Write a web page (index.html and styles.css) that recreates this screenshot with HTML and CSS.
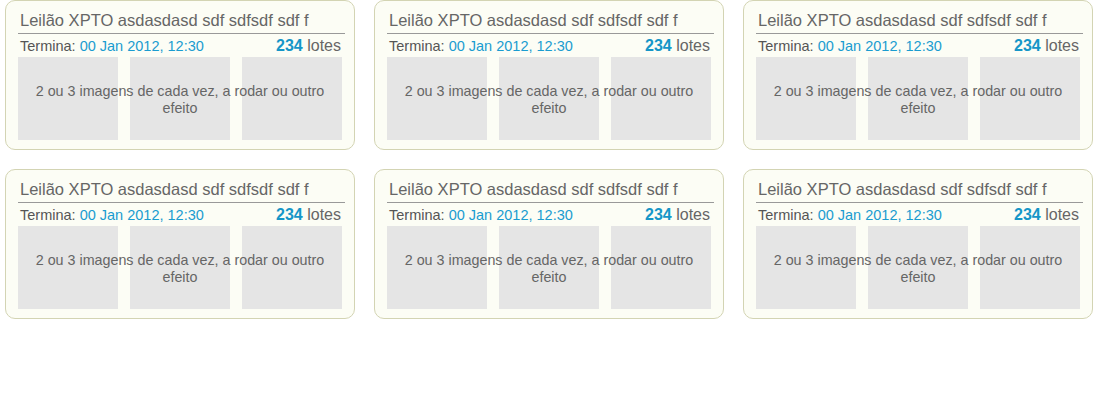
FILE: index.html
```html
<!DOCTYPE html>
<html lang="pt">
<head>
    <meta charset="UTF-8">
    <title>Leilões</title>
    <link rel="stylesheet" href="styles.css">
</head>
<body>

<div class="auctions">
    <div class="auction">
        <h3 class="auction-title">Leilão XPTO asdasdasd sdf sdfsdf sdf f</h3>
        <div class="auction-meta">
            <span class="ends">Termina: <span class="date">00 Jan 2012, 12:30</span></span>
            <span class="lots"><b>234</b> lotes</span>
        </div>
        <div class="gallery">
            <div class="thumbs"><div class="thumb"></div><div class="thumb"></div><div class="thumb"></div></div>
            <p class="caption">2 ou 3 imagens de cada vez, a rodar ou outro efeito</p>
        </div>
    </div>
    <div class="auction">
        <h3 class="auction-title">Leilão XPTO asdasdasd sdf sdfsdf sdf f</h3>
        <div class="auction-meta">
            <span class="ends">Termina: <span class="date">00 Jan 2012, 12:30</span></span>
            <span class="lots"><b>234</b> lotes</span>
        </div>
        <div class="gallery">
            <div class="thumbs"><div class="thumb"></div><div class="thumb"></div><div class="thumb"></div></div>
            <p class="caption">2 ou 3 imagens de cada vez, a rodar ou outro efeito</p>
        </div>
    </div>
    <div class="auction">
        <h3 class="auction-title">Leilão XPTO asdasdasd sdf sdfsdf sdf f</h3>
        <div class="auction-meta">
            <span class="ends">Termina: <span class="date">00 Jan 2012, 12:30</span></span>
            <span class="lots"><b>234</b> lotes</span>
        </div>
        <div class="gallery">
            <div class="thumbs"><div class="thumb"></div><div class="thumb"></div><div class="thumb"></div></div>
            <p class="caption">2 ou 3 imagens de cada vez, a rodar ou outro efeito</p>
        </div>
    </div>
    <div class="auction">
        <h3 class="auction-title">Leilão XPTO asdasdasd sdf sdfsdf sdf f</h3>
        <div class="auction-meta">
            <span class="ends">Termina: <span class="date">00 Jan 2012, 12:30</span></span>
            <span class="lots"><b>234</b> lotes</span>
        </div>
        <div class="gallery">
            <div class="thumbs"><div class="thumb"></div><div class="thumb"></div><div class="thumb"></div></div>
            <p class="caption">2 ou 3 imagens de cada vez, a rodar ou outro efeito</p>
        </div>
    </div>
    <div class="auction">
        <h3 class="auction-title">Leilão XPTO asdasdasd sdf sdfsdf sdf f</h3>
        <div class="auction-meta">
            <span class="ends">Termina: <span class="date">00 Jan 2012, 12:30</span></span>
            <span class="lots"><b>234</b> lotes</span>
        </div>
        <div class="gallery">
            <div class="thumbs"><div class="thumb"></div><div class="thumb"></div><div class="thumb"></div></div>
            <p class="caption">2 ou 3 imagens de cada vez, a rodar ou outro efeito</p>
        </div>
    </div>
    <div class="auction">
        <h3 class="auction-title">Leilão XPTO asdasdasd sdf sdfsdf sdf f</h3>
        <div class="auction-meta">
            <span class="ends">Termina: <span class="date">00 Jan 2012, 12:30</span></span>
            <span class="lots"><b>234</b> lotes</span>
        </div>
        <div class="gallery">
            <div class="thumbs"><div class="thumb"></div><div class="thumb"></div><div class="thumb"></div></div>
            <p class="caption">2 ou 3 imagens de cada vez, a rodar ou outro efeito</p>
        </div>
    </div>
</div>

</body>
</html>
```

FILE: styles.css
```css
body {
    font-family: 'Liberation Sans', Arial, sans-serif;
    background-color: #fff;
    margin: 0;
}

.auctions {
    display: grid;
    grid-template-columns: repeat(3, 350px);
    column-gap: 19px;
    row-gap: 19px;
    padding-left: 5px;
}

.auction {
    box-sizing: border-box;
    height: 150px;
    background-color: #fcfdf5;
    border: 1px solid #d3d4b3;
    border-radius: 10px;
    padding: 0 9px 0 12px;
}

.auction-title {
    margin: 0;
    padding: 10px 0 4px 2px;
    font-size: 16.5px;
    font-weight: normal;
    line-height: 18px;
    color: #666;
    border-bottom: 1px solid #999;
}

.auction-meta {
    display: flex;
    justify-content: space-between;
    align-items: baseline;
    padding: 3px 4px 0 2px;
    height: 20px;
    color: #555;
}

.ends {
    font-size: 14.5px;
}

.date {
    color: #1a9cd0;
}

.lots {
    font-size: 16px;
    color: #666;
}

.lots b {
    color: #1596c8;
}

.gallery {
    display: grid;
    margin-right: 3px;
}

.thumbs,
.caption {
    grid-area: 1 / 1;
}

.thumbs {
    display: flex;
    justify-content: space-between;
}

.thumb {
    width: 100px;
    height: 83px;
    background-color: #e5e5e5;
}

.caption {
    margin: 0;
    padding-top: 3px;
    align-self: center;
    text-align: center;
    font-size: 14.3px;
    line-height: 17px;
    color: #666;
}
```
